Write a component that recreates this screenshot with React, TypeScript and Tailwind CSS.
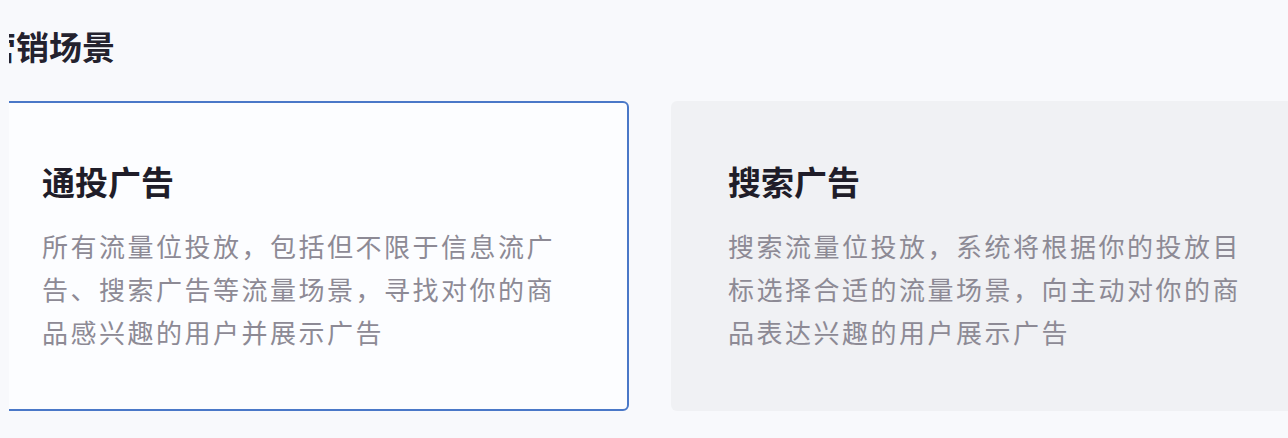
const cards = [
  {
    title: '通投广告',
    desc: '所有流量位投放，包括但不限于信息流广告、搜索广告等流量场景，寻找对你的商品感兴趣的用户并展示广告',
    active: true,
  },
  {
    title: '搜索广告',
    desc: '搜索流量位投放，系统将根据你的投放目标选择合适的流量场景，向主动对你的商品表达兴趣的用户展示广告',
    active: false,
  },
]

export default function App() {
  return (
    <div
      className="h-[438px] w-[1288px] overflow-hidden bg-[#f8f9fc] pl-[9px]"
      style={{ fontFamily: '"Noto Sans CJK SC", "Noto Sans", sans-serif' }}
    >
      <div className="h-full overflow-hidden">
        <div className="-ml-[24px] pt-[26px]">
          <h2 className="-ml-[2px] text-[33px] leading-[40px] font-bold text-[#24222e]">营销场景</h2>
          <div className="mt-[35px] flex gap-[42px]">
            {cards.map((card) => (
              <div
                key={card.title}
                className={
                  card.active
                    ? 'h-[310px] w-[644px] shrink-0 rounded-md border-2 border-[#4a78c8] bg-[#fcfdff] px-[55px] pt-[58px]'
                    : 'h-[310px] w-[644px] shrink-0 rounded-md border-2 border-transparent bg-[#f0f1f4] px-[55px] pt-[58px]'
                }
              >
                <div className="text-[33px] leading-[40px] font-bold text-[#1f1d29]">{card.title}</div>
                <p className="mt-[23px] w-[520px] text-[26px] leading-[43px] tracking-[2.5px] text-[#8d8a95]">
                  {card.desc}
                </p>
              </div>
            ))}
          </div>
        </div>
      </div>
    </div>
  )
}
